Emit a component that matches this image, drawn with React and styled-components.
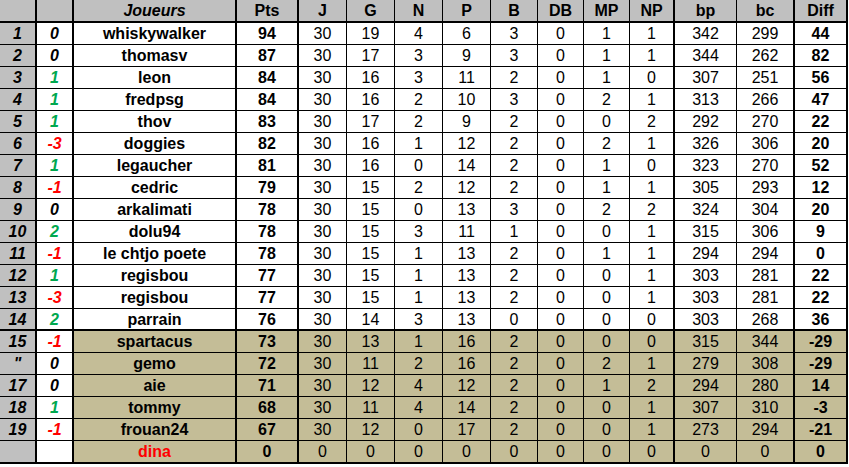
import React from "react";
import styled, { createGlobalStyle } from "styled-components";

const GlobalStyle = createGlobalStyle`
  body {
    margin: 0;
    background: #ffffff;
    font-family: "Liberation Sans", Arial, sans-serif;
  }
`;

const widths = [37, 37, 163, 62, 48, 48, 48, 48, 47, 46, 46, 45, 62, 58, 53];
const thickAfter = [0, 1, 2, 3, 11, 13, 14];

const tones = {
  gray: "#c0c0c0",
  white: "#ffffff",
  tan: "#c4bd97",
};

const Sheet = styled.div`
  display: grid;
  grid-template-columns: ${widths.map((w) => `${w}px`).join(" ")};
  width: 848px;
`;

const Cell = styled.div`
  box-sizing: border-box;
  display: flex;
  align-items: center;
  justify-content: center;
  height: ${(p) => p.$height || 22}px;
  border-right: ${(p) => (thickAfter.includes(p.$col) ? 2 : 1)}px solid #000;
  border-bottom: ${(p) => p.$bottom || 1}px solid #000;
  background: ${(p) => tones[p.$tone] || tones.white};
  color: ${(p) => p.$color || "#000"};
  font-size: 16px;
  font-weight: ${(p) => (p.$bold ? 700 : 400)};
  font-style: ${(p) => (p.$italic ? "italic" : "normal")};
  white-space: nowrap;
  padding-top: 1px;
`;

const headers = ["", "", "Joueurs", "Pts", "J", "G", "N", "P", "B", "DB", "MP", "NP", "bp", "bc", "Diff"];

const rows = [
  ["1", "0", "whiskywalker", 94, 30, 19, 4, 6, 3, 0, 1, 1, 342, 299, 44],
  ["2", "0", "thomasv", 87, 30, 17, 3, 9, 3, 0, 1, 1, 344, 262, 82],
  ["3", "1", "leon", 84, 30, 16, 3, 11, 2, 0, 1, 0, 307, 251, 56],
  ["4", "1", "fredpsg", 84, 30, 16, 2, 10, 3, 0, 2, 1, 313, 266, 47],
  ["5", "1", "thov", 83, 30, 17, 2, 9, 2, 0, 0, 2, 292, 270, 22],
  ["6", "-3", "doggies", 82, 30, 16, 1, 12, 2, 0, 2, 1, 326, 306, 20],
  ["7", "1", "legaucher", 81, 30, 16, 0, 14, 2, 0, 1, 0, 323, 270, 52],
  ["8", "-1", "cedric", 79, 30, 15, 2, 12, 2, 0, 1, 1, 305, 293, 12],
  ["9", "0", "arkalimati", 78, 30, 15, 0, 13, 3, 0, 2, 2, 324, 304, 20],
  ["10", "2", "dolu94", 78, 30, 15, 3, 11, 1, 0, 0, 1, 315, 306, 9],
  ["11", "-1", "le chtjo poete", 78, 30, 15, 1, 13, 2, 0, 1, 1, 294, 294, 0],
  ["12", "1", "regisbou", 77, 30, 15, 1, 13, 2, 0, 0, 1, 303, 281, 22],
  ["13", "-3", "regisbou", 77, 30, 15, 1, 13, 2, 0, 0, 1, 303, 281, 22],
  ["14", "2", "parrain", 76, 30, 14, 3, 13, 0, 0, 0, 0, 303, 268, 36],
  ["15", "-1", "spartacus", 73, 30, 13, 1, 16, 2, 0, 0, 0, 315, 344, -29],
  ['"', "0", "gemo", 72, 30, 11, 2, 16, 2, 0, 2, 1, 279, 308, -29],
  ["17", "0", "aie", 71, 30, 12, 4, 12, 2, 0, 1, 2, 294, 280, 14],
  ["18", "1", "tommy", 68, 30, 11, 4, 14, 2, 0, 0, 1, 307, 310, -3],
  ["19", "-1", "frouan24", 67, 30, 12, 0, 17, 2, 0, 0, 1, 273, 294, -21],
  ["", "", "dina", 0, 0, 0, 0, 0, 0, 0, 0, 0, 0, 0, 0],
];

function trendColor(v) {
  const n = Number(v);
  if (v === "" || n === 0) return "#000";
  return n > 0 ? "#00a84f" : "#ff0000";
}

function cellProps(r, c, value) {
  const relegated = r >= 14;
  const props = { $col: c };
  if (c === 0) {
    props.$tone = "gray";
    props.$bold = true;
    props.$italic = true;
  } else if (c === 1) {
    props.$tone = "white";
    props.$bold = true;
    props.$italic = true;
    props.$color = trendColor(value);
  } else {
    props.$tone = relegated ? "tan" : "white";
    props.$bold = c === 2 || c === 3 || c === 14;
  }
  if (c === 2 && value === "dina") props.$color = "#ff0000";
  if (r === 13) props.$bottom = 2;
  if (r === rows.length - 1) {
    props.$bottom = 2;
    props.$height = 23;
  }
  return props;
}

export default function App() {
  return (
    <>
      <GlobalStyle />
      <Sheet>
        {headers.map((h, c) => (
          <Cell key={`h${c}`} $col={c} $tone="gray" $bold $italic={c === 2} $bottom={2} $height={23}>
            {h}
          </Cell>
        ))}
        {rows.map((row, r) =>
          row.map((v, c) => (
            <Cell key={`${r}-${c}`} {...cellProps(r, c, v)}>
              {v}
            </Cell>
          ))
        )}
      </Sheet>
    </>
  );
}
